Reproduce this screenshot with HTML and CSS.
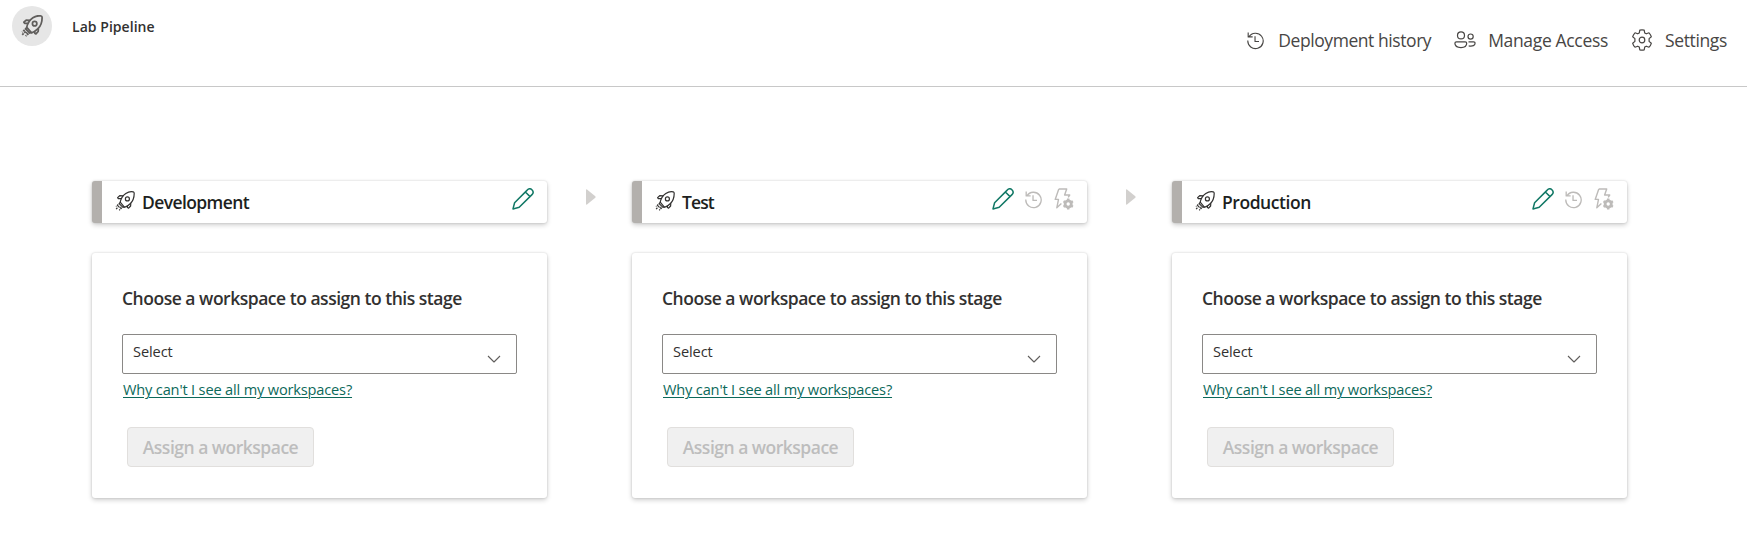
FILE: index.html
```
<!DOCTYPE html>
<html lang="en">
<head>
<meta charset="utf-8">
<title>Lab Pipeline</title>
<link rel="stylesheet" href="styles.css">
</head>
<body>
<svg class="sprite" aria-hidden="true">
  <symbol id="rocket" viewBox="0 0 20 20">
    <path d="M5.2 11.2C6 7.2 8 4.2 10.8 2.4 13.4.8 16.4.5 18.3.9 19.2 1.1 19.2 1.6 19.2 2.4 19.2 6.2 18 10 15.2 12.7 13.3 14.5 11.2 15.8 9.6 16.3Z"/>
    <circle cx="12.4" cy="7.9" r="2"/>
    <path d="M8.2 4.9 4.7 4.7 2.6 6.6 3.3 7.6 6.3 7.7M15.8 12.2 15.6 15 13.6 17.2 12.5 16.5 12.3 14.9M5.5 11.2 4.1 12.6 8 16.4 9.4 15.6"/>
    <path stroke-dasharray="1.8 .8" d="M3.3 13.5 1 15.6M4.2 14.9.6 18.6M5.6 15.8 4.6 16.8M6.8 16.8 4.2 19.2"/>
  </symbol>
  <symbol id="history" viewBox="0 0 20 20">
    <path d="M3.1 6.2A8.1 8.1 0 1 1 1.9 10M2.3 1.7V6.2H7M9.5 5.4V11H13.7"/>
  </symbol>
  <symbol id="people" viewBox="0 0 22 18">
    <circle cx="7" cy="4.4" r="3.5"/><circle cx="16.6" cy="5.6" r="2.6"/>
    <path d="M2.4 10.8H11.2Q12.7 10.8 12.7 12.3C12.7 15.2 10.2 16.6 7 16.6S.9 15.2.9 12.3Q.9 10.8 2.4 10.8ZM14.5 10.8H19.6Q21.1 10.8 21.1 12C21.1 14.6 18.8 15.5 14.7 14.9"/>
  </symbol>
  <symbol id="gear" viewBox="0 0 22 22">
    <path d="M8.8 1.1Q11 .6 13.2 1.1L13.7 3.9 15.3 4.8 18 3.8Q19.7 5.5 20.3 7.7L18.1 9.6V12.4L20.3 14.3Q19.7 16.5 18 18.2L15.3 17.2 13.7 18.1 13.2 20.9Q11 21.4 8.8 20.9L8.3 18.1 6.7 17.2 4 18.2Q2.3 16.5 1.7 14.3L3.9 12.4V9.6L1.7 7.7Q2.3 5.5 4 3.8L6.7 4.8 8.3 3.9Z"/>
    <circle cx="11" cy="11" r="2.8"/>
  </symbol>
  <symbol id="pencil" viewBox="0 0 22 22">
    <path d="M15.2 2.1C16.5.7 18.5.5 19.9 1.7 21.4 3.2 21.4 5.2 20 6.6L7.2 19.3 1 20.9 2.6 14.7ZM13.4 4 18 8.6"/>
  </symbol>
  <symbol id="bolt" viewBox="0 0 20 22">
    <path d="M4.8 1H12.7L10.6 7H15.7L14.2 9.3M4.8 1 1.2 11.4H4.5L2.8 19.8 7.4 15.4"/>
    <circle cx="14.2" cy="16" r="3.1" class="cog"/>
    <path class="teeth" d="M14.2 10.6V12.8M14.2 19.2V21.4M9.5 13.3 11.4 14.4M17 17.6 18.9 18.7M9.5 18.7 11.4 17.6M17 14.4 18.9 13.3"/>
  </symbol>
</svg>

<header class="topbar">
  <div class="identity">
    <div class="avatar"><svg class="rocket-large"><use href="#rocket"/></svg></div>
    <h1 class="pipeline-name">Lab Pipeline</h1>
  </div>
  <nav class="actions">
    <a class="action history-action"><svg class="icon-history"><use href="#history"/></svg><span>Deployment history</span></a>
    <a class="action people-action"><svg class="icon-people"><use href="#people"/></svg><span>Manage Access</span></a>
    <a class="action settings-action"><svg class="icon-gear"><use href="#gear"/></svg><span>Settings</span></a>
  </nav>
</header>

<main class="pipeline">
  <section class="stage">
    <div class="stage-header">
      <svg class="rocket"><use href="#rocket"/></svg>
      <h2 class="stage-name">Development</h2>
      <div class="tools"><svg class="icon-pencil"><use href="#pencil"/></svg></div>
    </div>
    <div class="panel">
      <h3 class="prompt">Choose a workspace to assign to this stage</h3>
      <div class="select"><span>Select</span><svg class="chevron" viewBox="0 0 14 9"><path d="M1 1 7 7 13 1"/></svg></div>
      <a class="help">Why can't I see all my workspaces?</a>
      <button class="assign" disabled>Assign a workspace</button>
    </div>
  </section>
  <svg class="arrow" viewBox="0 0 10 16"><path d="M0 1Q0 0 1 .4L9.3 7.3Q10 8 9.3 8.7L1 15.6Q0 16 0 15Z"/></svg>
  <section class="stage">
    <div class="stage-header">
      <svg class="rocket"><use href="#rocket"/></svg>
      <h2 class="stage-name name-test">Test</h2>
      <div class="tools"><svg class="icon-pencil"><use href="#pencil"/></svg><svg class="icon-history muted"><use href="#history"/></svg><svg class="icon-bolt muted"><use href="#bolt"/></svg></div>
    </div>
    <div class="panel">
      <h3 class="prompt">Choose a workspace to assign to this stage</h3>
      <div class="select"><span>Select</span><svg class="chevron" viewBox="0 0 14 9"><path d="M1 1 7 7 13 1"/></svg></div>
      <a class="help">Why can't I see all my workspaces?</a>
      <button class="assign" disabled>Assign a workspace</button>
    </div>
  </section>
  <svg class="arrow" viewBox="0 0 10 16"><path d="M0 1Q0 0 1 .4L9.3 7.3Q10 8 9.3 8.7L1 15.6Q0 16 0 15Z"/></svg>
  <section class="stage">
    <div class="stage-header">
      <svg class="rocket"><use href="#rocket"/></svg>
      <h2 class="stage-name name-production">Production</h2>
      <div class="tools"><svg class="icon-pencil"><use href="#pencil"/></svg><svg class="icon-history muted"><use href="#history"/></svg><svg class="icon-bolt muted"><use href="#bolt"/></svg></div>
    </div>
    <div class="panel">
      <h3 class="prompt">Choose a workspace to assign to this stage</h3>
      <div class="select"><span>Select</span><svg class="chevron" viewBox="0 0 14 9"><path d="M1 1 7 7 13 1"/></svg></div>
      <a class="help">Why can't I see all my workspaces?</a>
      <button class="assign" disabled>Assign a workspace</button>
    </div>
  </section>
</main>
</body>
</html>
```
FILE: styles.css
```
* { box-sizing: border-box; }
body {
  margin: 0;
  min-height: 537px;
  background: #fff;
  color: #323130;
  font-family: "Open Sans", "Noto Sans", sans-serif;
}
h1, h2, h3 { margin: 0; font-weight: 600; white-space: nowrap; }
svg { display: block; flex: none; fill: none; stroke: currentColor; stroke-width: 1.2; stroke-linejoin: round; }
.sprite { display: none; }

.topbar {
  display: flex;
  justify-content: space-between;
  height: 87px;
  border-bottom: 1px solid #c8c8c8;
}
.identity { display: flex; align-items: flex-start; gap: 20px; padding: 6px 0 0 12px; }
.avatar {
  display: flex;
  align-items: center;
  justify-content: center;
  width: 40px;
  height: 40px;
  border-radius: 50%;
  background: #e6e6e6;
  color: #605e5c;
}
.rocket-large { width: 22px; height: 22px; stroke-width: 1.6; }
.pipeline-name { font-size: 14px; line-height: 20px; padding-top: 11px; letter-spacing: 0.04px; }
.actions { display: flex; align-items: flex-start; padding: 27px 20px 0 0; color: #484644; }
.action { display: flex; align-items: center; height: 26px; font-size: 17.5px; line-height: 26px; white-space: nowrap; }
.history-action { letter-spacing: -0.43px; gap: 13px; }
.people-action { letter-spacing: -0.34px; gap: 12px; margin-left: 23px; }
.settings-action { letter-spacing: -0.35px; gap: 12px; margin-left: 23px; }
.icon-history { width: 19px; height: 19px; }
.icon-people { width: 22px; height: 18px; }
.icon-gear { width: 22px; height: 22px; }

.pipeline { display: flex; align-items: flex-start; padding: 94px 0 30px 92px; }
.stage { width: 455px; }
.stage-header, .panel {
  border-radius: 3px;
  background: #fff;
  box-shadow: 0 0 2px rgba(0, 0, 0, .16), 0 2px 5px rgba(0, 0, 0, .2);
}
.stage-header {
  display: flex;
  align-items: flex-start;
  height: 42px;
  border-left: 10px solid #b3b0ad;
  padding: 0 13px 0 13px;
}
.rocket { width: 20px; height: 20px; margin-top: 10px; color: #323130; }
.stage-name {
  margin: 8px 0 0 7px;
  font-size: 17.5px;
  line-height: 26px;
  letter-spacing: -0.6px;
  color: #201f1e;
}
.name-test { letter-spacing: -0.9px; }
.name-production { letter-spacing: -0.45px; }
.tools { display: flex; align-items: center; gap: 10px; margin: 7px 0 0 auto; color: #117865; }
.icon-pencil { width: 22px; height: 22px; stroke-width: 1.5; }
.muted { color: #bdbbb9; stroke-width: 1.4; }
.icon-bolt { width: 20px; height: 22px; }
.tools .icon-bolt { margin-left: 1px; }
.cog { stroke-width: 2.8; }
.teeth { stroke-width: 2.4; }
.arrow { width: 10px; height: 16px; margin: 8px 36px 0 39px; fill: #d2d0ce; stroke: none; }
.panel {
  display: flex;
  flex-direction: column;
  align-items: flex-start;
  height: 245px;
  margin-top: 30px;
  padding: 32px 30px 0;
}
.prompt { font-size: 17.5px; line-height: 26px; letter-spacing: -0.48px; }
.select {
  display: flex;
  justify-content: space-between;
  width: 395px;
  height: 40px;
  margin-top: 23px;
  padding: 0 15px 0 10px;
  border: 1px solid #8a8886;
  border-radius: 2px;
  font-size: 14.6px;
  line-height: 32px;
  letter-spacing: -0.1px;
}
.chevron { width: 14px; height: 9px; margin-top: 20px; stroke-width: 1.1; color: #605e5c; }
.help {
  margin: 4px 0 0 1px;
  font-size: 14.6px;
  line-height: 22px;
  letter-spacing: -0.17px;
  color: #0c695a;
  text-decoration: underline;
  text-underline-offset: 2px;
  text-decoration-thickness: 1px;
  white-space: nowrap;
}
.assign {
  width: 187px;
  height: 40px;
  margin: 27px 0 0 5px;
  padding: 0;
  border: 1px solid #e1dfdd;
  border-radius: 4px;
  background: #f0f0f0;
  color: #bdbdbd;
  font: 600 17.5px/26px "Open Sans", "Noto Sans", sans-serif;
  letter-spacing: -0.5px;
}
```
